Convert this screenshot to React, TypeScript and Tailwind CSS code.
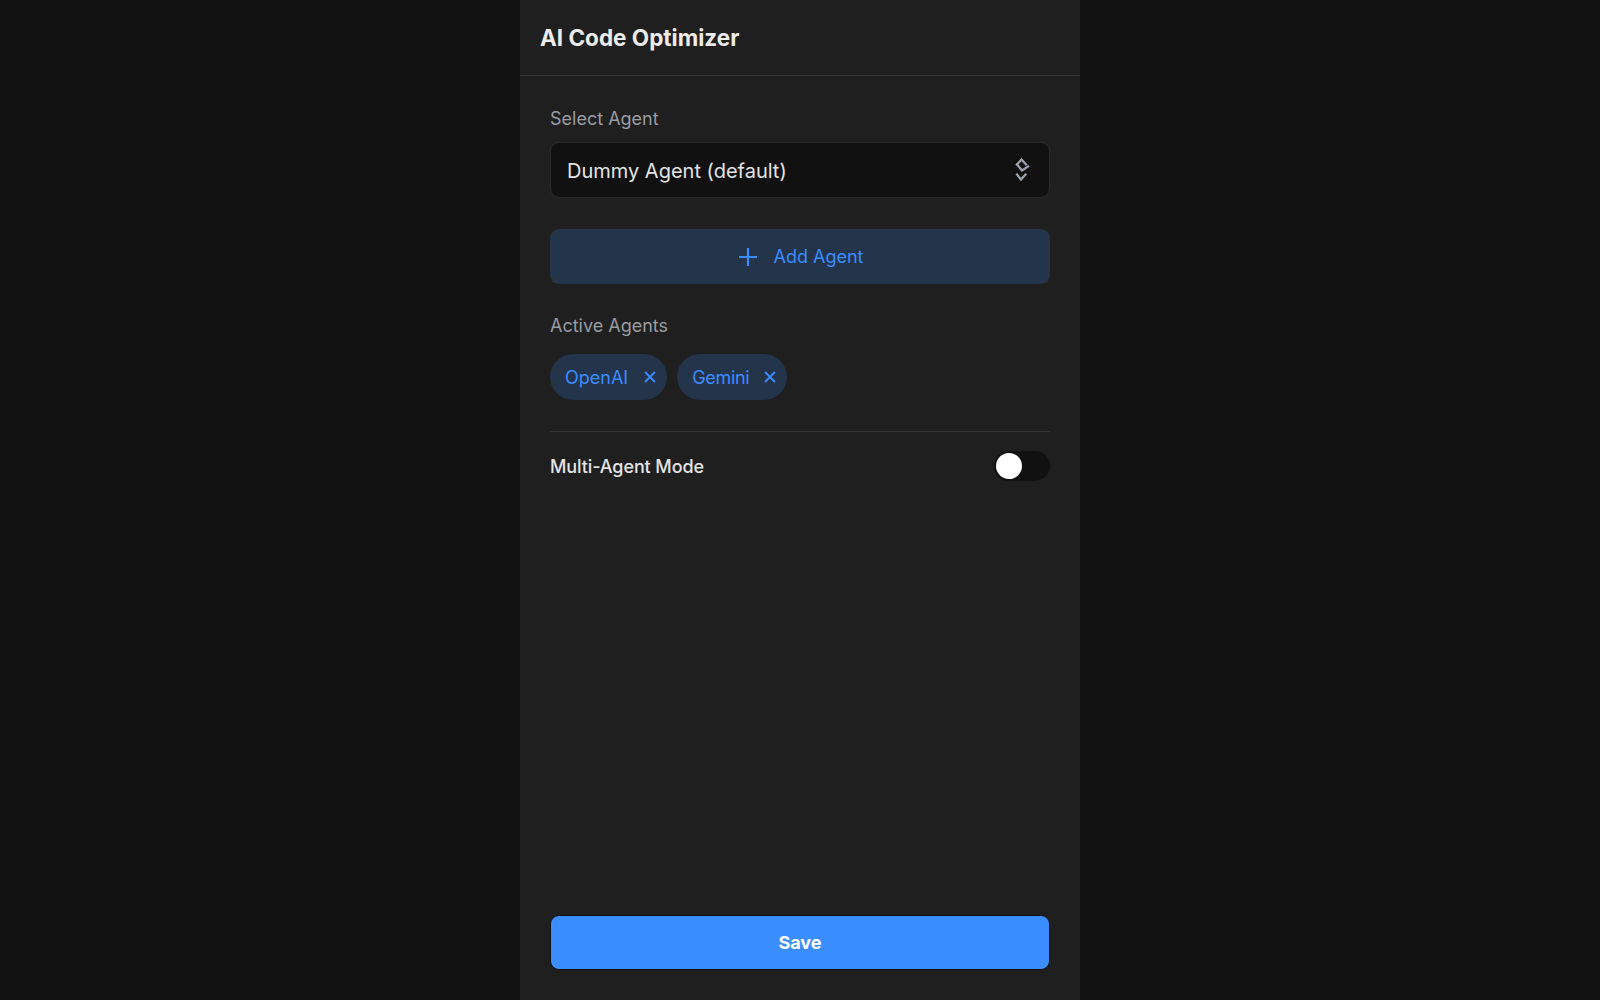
import React from "react";

function SelectIcon() {
  return (
    <svg width="30" height="34" viewBox="0 0 30 34" fill="none" stroke="#9ca3af" strokeWidth="2.2" strokeLinecap="square" strokeLinejoin="miter">
      <path d="M10 11.5 L14.5 6.5 L19 11.5" />
      <path d="M10 11.5 L15 17.5 L21 13.5" />
      <path d="M10 21.5 L14 26.5 L18.5 21.5" />
    </svg>
  );
}

function XIcon() {
  return (
    <svg width="14" height="14" viewBox="0 0 14 14" fill="none" stroke="#3b8cff" strokeWidth="1.8" strokeLinecap="round">
      <path d="M2.5 2.5 L11.5 11.5 M11.5 2.5 L2.5 11.5" />
    </svg>
  );
}

function PlusIcon() {
  return (
    <svg width="22" height="22" viewBox="0 0 22 22" fill="none" stroke="#3b8cff" strokeWidth="2.2" strokeLinecap="butt">
      <path d="M11 2 V20 M2 11 H20" />
    </svg>
  );
}

export default function App() {
  const font = { fontFamily: "Inter, 'Noto Sans', sans-serif" };
  return (
    <div className="min-h-screen w-full bg-[#121212] flex justify-center" style={font}>
      <div className="w-[560px] h-[1000px] bg-[#1f1f1f] flex flex-col">
        <div className="h-[76px] px-5 flex items-center border-b border-[#363636]">
          <h1 className="text-[22.5px] font-bold text-[#ececec]">AI Code Optimizer</h1>
        </div>
        <div className="flex-1 flex flex-col px-[30px] pt-[33px] pb-[30px]">
          <div className="text-[18px] text-[#9a9ca3] leading-[20px]">Select Agent</div>
          <div className="mt-[13px] h-[56px] rounded-[9px] bg-[#111111] border border-[#2c2c2c] flex items-center justify-between pl-4 pr-3">
            <span className="text-[20px] text-[#e4e4e4] leading-[24px] pt-[2px]">Dummy Agent (default)</span>
            <SelectIcon />
          </div>
          <button className="mt-[31px] h-[55px] rounded-[9px] bg-[#24344b] flex items-center justify-center gap-[15px] text-[18px] text-[#3b8cff]">
            <PlusIcon />
            <span>Add Agent</span>
          </button>
          <div className="mt-[32px] text-[18px] text-[#9a9ca3] leading-[20px]">Active Agents</div>
          <div className="mt-[18px] flex gap-[10px]">
            <div className="h-[46px] rounded-full bg-[#24344b] flex items-center pl-[15px] pr-[10px] gap-[15px]">
              <span className="text-[18px] text-[#3b8cff]">OpenAI</span>
              <XIcon />
            </div>
            <div className="h-[46px] rounded-full bg-[#24344b] flex items-center pl-[15px] pr-[10px] gap-[14px]">
              <span className="text-[18px] text-[#3b8cff] tracking-[-0.3px]">Gemini</span>
              <XIcon />
            </div>
          </div>
          <div className="mt-[31px] h-px bg-[#333333]" />
          <div className="mt-[19px] flex items-center justify-between">
            <span className="text-[18px] font-medium text-[#e4e4e4] tracking-[-0.1px]">Multi-Agent Mode</span>
            <div className="w-[56px] h-[30px] rounded-full bg-[#111111] flex items-center px-[2px]">
              <div className="w-[26px] h-[26px] rounded-full bg-white" />
            </div>
          </div>
          <div className="flex-1" />
          <button className="h-[55px] rounded-[9px] bg-[#3b8eff] border border-[#111] text-white text-[18px] font-bold">
            Save
          </button>
        </div>
      </div>
    </div>
  );
}
